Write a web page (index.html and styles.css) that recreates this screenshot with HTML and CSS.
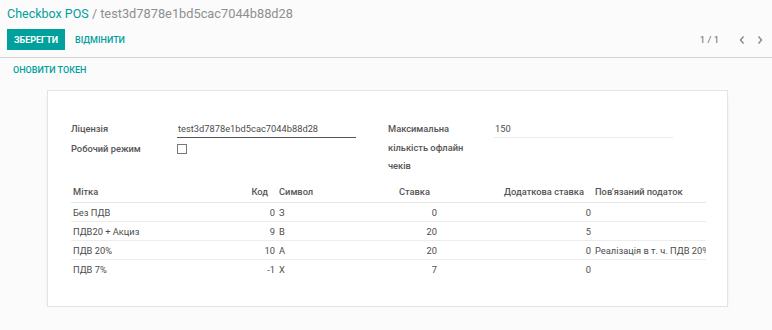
FILE: index.html
```html
<!DOCTYPE html>
<html lang="uk">
<head>
  <meta charset="UTF-8" />
  <title>Checkbox POS</title>
  <link rel="stylesheet" href="styles.css">
</head>
<body>
  <div class="control-panel">
    <div class="breadcrumb"><a href="#">Checkbox POS</a> <span class="sep">/</span> <span class="current">test3d7878e1bd5cac7044b88d28</span></div>
    <div class="cp-bottom">
      <div class="buttons">
        <button class="btn-primary">ЗБЕРЕГТИ</button>
        <button class="btn-link">ВІДМІНИТИ</button>
      </div>
      <div class="pager">
        <span class="pager-value">1 / 1</span>
        <span class="pager-btn">
          <svg width="8" height="10" viewBox="0 0 8 10"><path d="M5.5 1.5 L2.5 5 L5.5 8.5" fill="none" stroke="#888" stroke-width="1.4"/></svg>
        </span>
        <span class="pager-btn">
          <svg width="8" height="10" viewBox="0 0 8 10"><path d="M2.5 1.5 L5.5 5 L2.5 8.5" fill="none" stroke="#888" stroke-width="1.4"/></svg>
        </span>
      </div>
    </div>
  </div>

  <div class="form-header">
    <button class="btn-link">ОНОВИТИ ТОКЕН</button>
  </div>

  <div class="sheet">
    <div class="groups">
      <div class="group">
        <label class="label">Ліцензія</label>
        <div class="field field-input">test3d7878e1bd5cac7044b88d28</div>
        <label class="label">Робочий режим</label>
        <div class="field"><span class="checkbox"></span></div>
      </div>
      <div class="group">
        <label class="label">Максимальна кількість офлайн чеків</label>
        <div class="field field-input light">150</div>
      </div>
    </div>

    <table class="list">
      <thead>
        <tr>
          <th class="c-label">Мітка</th>
          <th class="c-code num">Код</th>
          <th class="c-symbol">Символ</th>
          <th class="c-rate num">Ставка</th>
          <th class="c-extra num">Додаткова ставка</th>
          <th class="c-tax">Пов'язаний податок</th>
        </tr>
      </thead>
      <tbody>
        <tr><td>Без ПДВ</td><td class="num">0</td><td>З</td><td class="num">0</td><td class="num">0</td><td class="tax"></td></tr>
        <tr><td>ПДВ20 + Акциз</td><td class="num">9</td><td>В</td><td class="num">20</td><td class="num">5</td><td class="tax"></td></tr>
        <tr><td>ПДВ 20%</td><td class="num">10</td><td>А</td><td class="num">20</td><td class="num">0</td><td class="tax">Реалізація в т. ч. ПДВ 20%</td></tr>
        <tr><td>ПДВ 7%</td><td class="num">-1</td><td>Х</td><td class="num">7</td><td class="num">0</td><td class="tax"></td></tr>
      </tbody>
    </table>
  </div>
</body>
</html>
```

FILE: styles.css
```css
body { margin: 0; font-family: Roboto, "Liberation Sans", sans-serif; font-size: 9.3px; color: #4c4c4c; background: #fbfbfb; }
button { font-family: inherit; border: none; background: none; cursor: pointer; }
a { color: #00a09d; text-decoration: none; }

.control-panel { padding: 4px 3px 7px 7px; border-bottom: 1px solid #d4d4d4; }
.breadcrumb { font-size: 12.5px; line-height: 20px; color: #8f8f8f; }
.breadcrumb .current { font-size: 12.8px; }
.cp-bottom { display: flex; justify-content: space-between; align-items: center; margin-top: 5px; }
.buttons { display: flex; align-items: center; }
.btn-primary { background: #00a09d; color: white; font-weight: bold; font-size: 9px; height: 21px; padding: 0 7px; }
.btn-link { color: #00a09d; font-weight: 500; font-size: 9px; padding: 0 10px; height: 21px; }
.pager { display: flex; align-items: center; font-size: 9.5px; color: #666; }
.pager-value { margin-right: 14px; }
.pager-btn { display: inline-flex; width: 18px; justify-content: center; }

.form-header { padding: 1px 3px 0 3px; }

.sheet { width: 635px; margin: 10px 0 0 47px; background: white; border: 1px solid #e4e4e4; padding: 29px 21px 27px 23px; box-shadow: 0 4px 5px -3px rgba(0,0,0,0.22); }

.groups { display: flex; align-items: flex-start; gap: 32px; }
.group { display: grid; grid-template-columns: 106px 179px; align-items: start; }
.label { font-weight: 500; color: #555; line-height: 18.5px; padding-right: 10px; }
.field { line-height: 18.5px; color: #4c4c4c; }
.field-input { border-bottom: 1px solid #555; line-height: 17px; padding-left: 1px; margin-bottom: 2px; }
.field-input.light { border-bottom-color: #ebebeb; }
.checkbox { display: inline-block; width: 8px; height: 8px; border: 1px solid #777; vertical-align: -2px; }

.list { width: 100%; border-collapse: collapse; margin-top: 5px; table-layout: fixed; }
.list th, .list td { box-sizing: border-box; }
.list th { font-weight: 500; color: #555; text-align: left; padding: 0 2px; height: 22px; border-bottom: 1px solid #e6e6e6; white-space: nowrap; }
.list td { padding: 0 2px; height: 19px; border-bottom: 1px solid #ededed; white-space: nowrap; overflow: hidden; }
.list tr:last-child td { border-bottom: none; }
.list td.num { text-align: right; }
.list th.num { text-align: right; padding-right: 9px; }
.list .tax { padding-left: 2px; }
.c-label { width: 166px; }
.c-code { width: 40px; }
.c-symbol { width: 118px; }
.c-rate { width: 44px; }
.c-extra { width: 154px; }
```
